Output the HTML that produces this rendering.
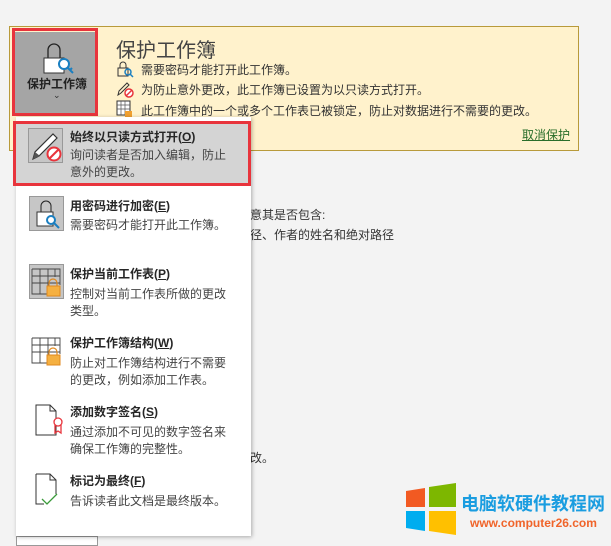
<!DOCTYPE html>
<html><head><meta charset="utf-8"><style>
*{margin:0;padding:0;box-sizing:border-box}
body{width:611px;height:541px;background:#f3f3f3;position:relative;overflow:hidden;font-family:"Liberation Sans","Noto Sans CJK SC",sans-serif;color:#333;font-size:12px}
.a{position:absolute;white-space:nowrap}
.panel{left:9px;top:26px;width:570px;height:125px;background:#fff2cc;border:1px solid #b89a3a}
.btn{left:15px;top:32px;width:80px;height:82px;background:#a5a5a5}
.redb{border:3px solid #e8343c}
.menu{left:16px;top:117px;width:235px;height:419px;background:#fff;box-shadow:1px 1px 4px rgba(0,0,0,.3)}
.t{font-weight:bold;font-size:12px;color:#262626}
.d{font-size:12px;color:#444;line-height:17px}
</style></head><body>
<div class="a panel"></div>
<div class="a btn"></div>
<svg class="a" style="left:40px;top:40px" width="36" height="36"><path d="M8 18v-8a6 6 0 0 1 12 0v8" fill="none" stroke="#222" stroke-width="1.3"/><rect x="4" y="18" width="20" height="15" fill="#fff" stroke="#333"/><circle cx="24" cy="24" r="5" fill="#fff" stroke="#1a7fc1" stroke-width="2"/><path d="M27 27l6 6M30 30l2-2" stroke="#1a7fc1" stroke-width="2"/></svg>
<div class="a" style="left:27px;top:75px;font-size:12px;font-weight:bold;color:#222">保护工作簿</div>
<div class="a" style="left:53px;top:90px;font-size:9px;color:#333">⌄</div>
<div class="a redb" style="left:12px;top:28px;width:86px;height:88px"></div>
<div class="a" style="left:116px;top:34px;font-size:20px;color:#444">保护工作簿</div>
<svg class="a" style="left:116px;top:60px" width="18" height="18"><path d="M4 8V5a3 3 0 0 1 6 0v3" fill="none" stroke="#333"/><rect x="2" y="8" width="10" height="8" fill="none" stroke="#333"/><circle cx="12" cy="12" r="3" fill="none" stroke="#1a7fc1" stroke-width="1.5"/><path d="M14 14l3 3" stroke="#1a7fc1" stroke-width="1.5"/></svg>
<svg class="a" style="left:116px;top:80px" width="18" height="18"><path d="M2 15l1-4 8-8 2 2-8 8z" fill="none" stroke="#333"/><circle cx="13" cy="13" r="4" fill="#fff" stroke="#e8343c" stroke-width="1.5"/><path d="M10 16l6-6" stroke="#e8343c" stroke-width="1.5"/></svg>
<svg class="a" style="left:116px;top:100px" width="18" height="18"><rect x="1" y="1" width="13" height="14" fill="#fff" stroke="#333"/><path d="M1 5h13M1 9h13M5 1v14M9 1v14" stroke="#555" stroke-width=".7"/><rect x="9" y="11" width="7" height="6" fill="#f0a030"/></svg>
<div class="a" style="left:141px;top:61px">需要密码才能打开此工作簿。</div>
<div class="a" style="left:141px;top:81px">为防止意外更改，此工作簿已设置为以只读方式打开。</div>
<div class="a" style="left:141px;top:102px">此工作簿中的一个或多个工作表已被锁定，防止对数据进行不需要的更改。</div>
<div class="a" style="left:522px;top:126px;color:#2a6e2a;text-decoration:underline">取消保护</div>
<div class="a" style="left:250px;top:206px">意其是否包含:</div>
<div class="a" style="left:250px;top:226px">径、作者的姓名和绝对路径</div>
<div class="a" style="left:250px;top:449px">改。</div>
<div class="a" style="left:16px;top:536px;width:82px;height:10px;border:1px solid #999;background:#fff"></div>
<div class="menu a"></div>
<div class="a" style="left:14px;top:122px;width:236px;height:63px;background:#d4d4d4"></div>
<div class="a" style="left:28px;top:128px;width:35px;height:35px;background:#c6c6c6;border:1px solid #999"></div>
<svg class="a" style="left:28px;top:128px" width="35" height="35"><path d="M5 31l2-7 18-18 4 4-18 18z" fill="#fff" stroke="#333" stroke-width="1.2"/><path d="M5 31l2-7 5 4z" fill="#555"/><circle cx="26" cy="26" r="6.5" fill="#fff" stroke="#e8343c" stroke-width="2"/><path d="M21.5 30.5l9-9" stroke="#e8343c" stroke-width="2"/></svg>
<div class="a t" style="left:70px;top:128px">始终以只读方式打开(<u>O</u>)</div>
<div class="a d" style="left:70px;top:147px">询问读者是否加入编辑，防止<br>意外的更改。</div>
<div class="a redb" style="left:13px;top:121px;width:238px;height:65px"></div>
<div class="a" style="left:29px;top:196px;width:35px;height:35px;background:#c6c6c6;border:1px solid #999"></div>
<svg class="a" style="left:29px;top:196px" width="35" height="35"><path d="M12 16V10a5 5 0 0 1 10 0v6" fill="none" stroke="#222"/><rect x="8" y="16" width="16" height="14" fill="#fff" stroke="#333"/><circle cx="22" cy="24" r="4" fill="#fff" stroke="#1a7fc1" stroke-width="2"/><path d="M25 27l5 5" stroke="#1a7fc1" stroke-width="2"/></svg>
<div class="a t" style="left:70px;top:197px">用密码进行加密(<u>E</u>)</div>
<div class="a d" style="left:70px;top:217px">需要密码才能打开此工作簿。</div>
<div class="a" style="left:29px;top:264px;width:35px;height:35px;background:#c6c6c6;border:1px solid #999"></div>
<svg class="a" style="left:29px;top:264px" width="35" height="35"><path d="M3 5h28v16M3 5v25h18M3 12h28M3 19h28M11 5v25M19 5v18M26 5v8" fill="none" stroke="#444" stroke-width=".9"/><path d="M20 22v-3a4 4 0 0 1 8 0v3" fill="none" stroke="#e08a20" stroke-width="1.2"/><rect x="18" y="22" width="13" height="10" fill="#f5b041" stroke="#e08a20"/></svg>
<div class="a t" style="left:70px;top:265px">保护当前工作表(<u>P</u>)</div>
<div class="a d" style="left:70px;top:286px">控制对当前工作表所做的更改<br>类型。</div>
<svg class="a" style="left:29px;top:333px" width="35" height="35"><path d="M3 5h28v16M3 5v25h18M3 12h28M3 19h28M11 5v25M19 5v18M26 5v8" fill="none" stroke="#444" stroke-width=".9"/><path d="M20 22v-3a4 4 0 0 1 8 0v3" fill="none" stroke="#e08a20" stroke-width="1.2"/><rect x="18" y="22" width="13" height="10" fill="#f5b041" stroke="#e08a20"/></svg>
<div class="a t" style="left:70px;top:334px">保护工作簿结构(<u>W</u>)</div>
<div class="a d" style="left:70px;top:355px">防止对工作簿结构进行不需要<br>的更改，例如添加工作表。</div>
<svg class="a" style="left:29px;top:402px" width="35" height="35"><path d="M7 3h14l6 6v24H7z M21 3v6h6" fill="none" stroke="#333"/><circle cx="29" cy="20" r="4" fill="#fff" stroke="#e8343c" stroke-width="1.3"/><path d="M26 23v8l3-2 3 2v-8" fill="none" stroke="#e8343c" stroke-width="1.3"/></svg>
<div class="a t" style="left:70px;top:403px">添加数字签名(<u>S</u>)</div>
<div class="a d" style="left:70px;top:424px">通过添加不可见的数字签名来<br>确保工作簿的完整性。</div>
<svg class="a" style="left:29px;top:471px" width="35" height="35"><path d="M7 3h14l6 6v14 M21 3v6h6 M7 3v30h8" fill="none" stroke="#333"/><path d="M13 28l5 5 10-10" fill="none" stroke="#3a9a3a" stroke-width="1.3"/></svg>
<div class="a t" style="left:70px;top:472px">标记为最终(<u>F</u>)</div>
<div class="a d" style="left:70px;top:493px">告诉读者此文档是最终版本。</div>
<svg class="a" style="left:406px;top:483px" width="52" height="52"><path d="M0 8l19-3v19H0z" fill="#f25a22"/><path d="M23 4l27-4v24H23z" fill="#7db700"/><path d="M0 28h19v20L0 45z" fill="#00adef"/><path d="M23 28h27v24l-27-4z" fill="#ffc000"/></svg>
<div class="a" style="left:461px;top:490px;font-size:18px;font-weight:bold;color:#1a9de0">电脑软硬件教程网</div>
<div class="a" style="left:470px;top:516px;font-size:12px;font-weight:bold;color:#f0642a">www.computer26.com</div>
</body></html>
